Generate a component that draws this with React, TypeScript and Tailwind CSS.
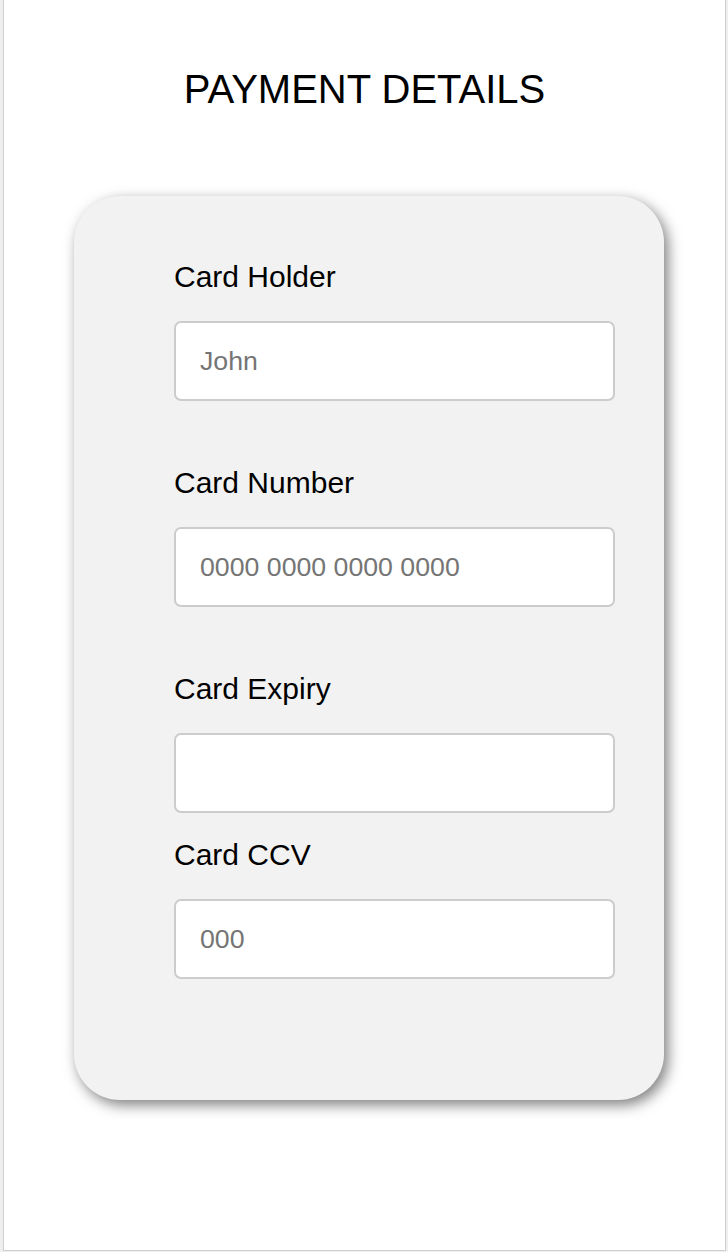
import React from "react";

function Field({ label, placeholder, className = "" }: { label: string; placeholder?: string; className?: string }) {
  return (
    <div className={"flex flex-col " + className}>
      <label className="block text-[30px] leading-[34px] text-black">{label}</label>
      <input
        type="text"
        placeholder={placeholder}
        className="mt-[27px] h-[80px] w-[441px] rounded-[7px] border-2 border-[#cccccc] bg-white px-[24px] text-[26.7px] text-black placeholder:text-[#757575] outline-none"
        style={{ fontFamily: '"Liberation Sans", Arial, sans-serif' }}
      />
    </div>
  );
}

export default function App() {
  return (
    <div
      className="bg-[#efefef] pl-[3px] pr-[2px] pb-[1px]"
      style={{ fontFamily: '"Liberation Sans", Arial, sans-serif' }}
    >
      <div className="h-[1251px] border-x border-b border-[#cfcfcf] bg-white flex flex-col items-center">
        <h1 className="mt-[67px] text-[40px] leading-[44px] text-black">PAYMENT DETAILS</h1>
        <div className="mt-[85px] w-[590px] h-[904px] rounded-[46px] bg-[#f2f2f2] shadow-[4px_5px_14px_rgba(0,0,0,0.5)] pt-[64px] pl-[100px] self-start ml-[70px]">
          <Field label="Card Holder" placeholder="John" />
          <Field label="Card Number" placeholder="0000 0000 0000 0000" className="mt-[65px]" />
          <Field label="Card Expiry" className="mt-[65px]" />
          <Field label="Card CCV" placeholder="000" className="mt-[25px]" />
        </div>
      </div>
    </div>
  );
}
